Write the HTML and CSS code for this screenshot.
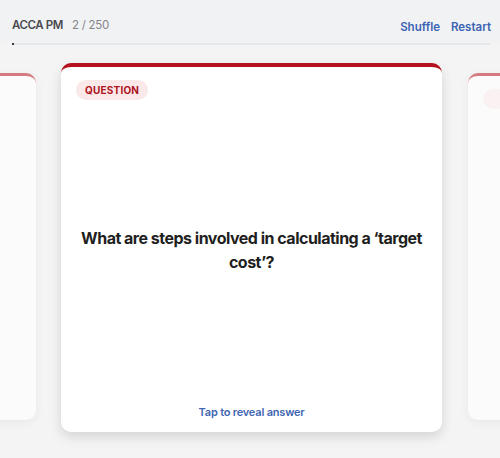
FILE: index.html
```html
<!DOCTYPE html>
<html lang="en">
<head>
    <meta charset="UTF-8">
    <meta name="viewport" content="width=device-width, initial-scale=1.0">
    <title>ACCA PM Flashcards</title>
    <link rel="stylesheet" href="styles.css">
</head>
<body>
    <header class="top-bar">
        <div class="deck-info">
            <span class="deck-name">ACCA PM</span>
            <span class="deck-count">2 / 250</span>
        </div>
        <nav class="deck-actions">
            <a href="#" class="action">Shuffle</a>
            <a href="#" class="action">Restart</a>
        </nav>
    </header>
    <div class="progress">
        <div class="progress-fill" style="width: 0.4%"></div>
    </div>

    <main class="deck">
        <div class="card card-side">
            <span class="tag tag-empty"></span>
        </div>
        <div class="card card-current">
            <span class="tag">QUESTION</span>
            <p class="question">What are steps involved in calculating a ‘target cost’?</p>
            <a href="#" class="reveal">Tap to reveal answer</a>
        </div>
        <div class="card card-side">
            <span class="tag tag-empty"></span>
        </div>
    </main>
</body>
</html>
```

FILE: styles.css
```css
/* Flashcard deck */
body {
    font-family: Inter, "Noto Sans", sans-serif;
    background: #f4f4f5;
    margin: 0;
    padding: 0;
    height: 458px;
    overflow: hidden;
}
.top-bar {
    display: flex;
    justify-content: space-between;
    align-items: center;
    height: 43px;
    padding: 7px 9px 0 12px;
    box-sizing: border-box;
    background: #f1f2f4;
}
.deck-info {
    display: flex;
    align-items: baseline;
    gap: 9px;
    font-size: 11.5px;
}
.deck-name {
    color: #4a4a4f;
    font-weight: 600;
    letter-spacing: -0.4px;
}
.deck-count {
    color: #85858a;
    letter-spacing: -0.3px;
}
.deck-actions {
    display: flex;
    gap: 11px;
    padding-top: 3px;
}
.action {
    color: #3b63b3;
    font-size: 11.5px;
    font-weight: 600;
    text-decoration: none;
}
.progress {
    height: 2px;
    margin: 0 10px 0 12px;
    background: #e6e7eb;
}
.progress-fill {
    height: 100%;
    background: #3a3a3f;
}
.deck {
    display: flex;
    gap: 25px;
    margin-left: -322px;
    margin-top: 18px;
}
.card {
    flex: none;
    background: #ffffff;
    border-radius: 10px;
    border-top: 4px solid #b3121c;
    box-sizing: border-box;
    display: flex;
    flex-direction: column;
    align-items: flex-start;
    padding: 13px 15px 12px;
}
.card-current {
    width: 381px;
    height: 369px;
    box-shadow: 0 5px 12px rgba(0, 0, 0, 0.13);
}
.card-side {
    width: 358px;
    height: 347px;
    margin-top: 10px;
    border-top-width: 3px;
    border-top-color: #c9484e;
    box-shadow: 0 3px 10px rgba(0, 0, 0, 0.06);
    opacity: 0.7;
}
.card-side:last-child {
    margin-left: 1px;
}
.tag {
    background: #fbe8e9;
    color: #ad1420;
    font-size: 10px;
    font-weight: 700;
    letter-spacing: 0.2px;
    padding: 4px 9px;
    border-radius: 11px;
}
.tag-empty {
    width: 52px;
    height: 12px;
    opacity: 0.6;
}
.question {
    flex: 1;
    display: flex;
    align-items: center;
    margin: 0 -3px 6px;
    text-align: center;
    font-size: 16px;
    font-weight: 700;
    line-height: 24px;
    letter-spacing: -0.5px;
    color: #1f1f22;
}
.reveal {
    align-self: center;
    color: #3f66b2;
    font-size: 11px;
    font-weight: 600;
    letter-spacing: -0.2px;
    text-decoration: none;
    margin-bottom: 1px;
}
```
